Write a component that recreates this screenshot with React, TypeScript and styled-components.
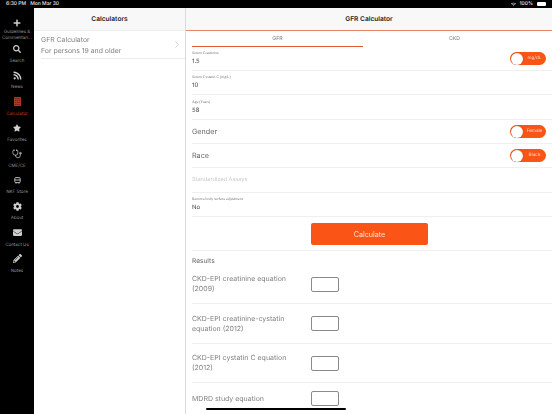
import React from "react";
import styled, { createGlobalStyle } from "styled-components";
import { FaPlus, FaSearch, FaRss, FaStar, FaCog, FaEnvelope, FaPencilAlt, FaWifi } from "react-icons/fa";
import { Stethoscope } from "lucide-react";

const Global = createGlobalStyle`
  html, body { margin: 0; padding: 0; background: #000; }
  * { box-sizing: border-box; }
  #root { width: 552px; height: 414px; overflow: hidden; font-family: Inter, "Liberation Sans", sans-serif; text-rendering: geometricPrecision; }
`;

const Page = styled.div`
  position: relative;
  width: 552px;
  height: 414px;
  display: flex;
  flex-direction: column;
  background: #000;
  overflow: hidden;
`;
const StatusBar = styled.div`
  height: 8px;
  flex: none;
  padding: 0 6px;
  display: flex;
  align-items: center;
  justify-content: space-between;
  color: #e8e8e8;
  font-size: 5px;
  font-weight: 500;
  line-height: 8px;
`;
const StatusGroup = styled.div`
  display: flex;
  align-items: center;
  gap: 4px;
`;
const Battery = styled.span`
  display: block;
  width: 9px;
  height: 4px;
  background: #fff;
  border-radius: 1px;
`;
const Body = styled.div`
  flex: 1;
  display: flex;
  min-height: 0;
`;
const Sidebar = styled.nav`
  width: 34px;
  flex: none;
  padding-top: 8px;
  display: flex;
  flex-direction: column;
  background: #000;
`;
const NavItem = styled.div`
  height: 26.2px;
  display: flex;
  flex-direction: column;
  align-items: center;
`;
const NavIcon = styled.div<{ $active?: boolean }>`
  height: 14px;
  flex: none;
  display: flex;
  align-items: center;
  justify-content: center;
  color: ${(p) => (p.$active ? "#b03a1f" : "#cfcfcf")};
`;
const NavLabel = styled.div<{ $active?: boolean; $first?: boolean }>`
  margin-top: ${(p) => (p.$first ? "0" : "3px")};
  font-size: 4.5px;
  line-height: 6px;
  white-space: nowrap;
  text-align: center;
  color: ${(p) => (p.$active ? "#c8371a" : "#8f8f8f")};
`;
const Master = styled.section`
  width: 152px;
  flex: none;
  background: #fff;
  border-right: 1px solid #d9d9d9;
  display: flex;
  flex-direction: column;
  border-top-left-radius: 2px;
`;
const NavBar = styled.header<{ $accent?: boolean }>`
  height: 23px;
  flex: none;
  display: flex;
  align-items: center;
  justify-content: center;
  background: #f8f8f8;
  font-size: 6.6px;
  font-weight: 600;
  color: #222;
  border-bottom: 1px solid ${(p) => (p.$accent ? "#e58a68" : "#ededed")};
`;
const ListRow = styled.div`
  margin-left: 7px;
  height: 28px;
  padding-right: 6px;
  display: flex;
  align-items: center;
  justify-content: space-between;
  border-bottom: 1px solid #ececec;
`;
const ListText = styled.div`
  display: flex;
  flex-direction: column;
  gap: 2px;
  font-size: 6.9px;
  line-height: 9px;
  color: #808080;
  will-change: transform;
`;
const Detail = styled.section`
  flex: 1;
  min-width: 0;
  background: #fff;
  display: flex;
  flex-direction: column;
`;
const Tabs = styled.div`
  height: 16px;
  flex: none;
  padding: 0 6px;
  display: flex;
  will-change: transform;
`;
const Tab = styled.div<{ $active?: boolean; $grow: number }>`
  flex: ${(p) => p.$grow} 0 0;
  display: flex;
  align-items: center;
  justify-content: center;
  font-size: 5.2px;
  color: #777;
  border-bottom: 1px solid ${(p) => (p.$active ? "#e0592c" : "transparent")};
`;
const Form = styled.div`
  padding-left: 6px;
  display: flex;
  flex-direction: column;
  will-change: transform;
`;
const Row = styled.div<{ $h: number }>`
  height: ${(p) => p.$h}px;
  padding-right: 6px;
  display: flex;
  align-items: center;
  justify-content: space-between;
  border-bottom: 1px solid #efefef;
`;
const Field = styled.div`
  display: flex;
  flex-direction: column;
  gap: 2px;
`;
const FieldLabel = styled.div`
  font-family: "Liberation Serif", serif;
  font-size: 3.8px;
  line-height: 5px;
  color: #777;
`;
const FieldValue = styled.div`
  font-size: 6px;
  line-height: 8px;
  color: #444;
`;
const RowTitle = styled.div<{ $muted?: boolean }>`
  font-size: ${(p) => (p.$muted ? "5.6px" : "7.2px")};
  color: ${(p) => (p.$muted ? "#c8c8c8" : "#666")};
`;
const Toggle = styled.div`
  position: relative;
  width: 36px;
  height: 13px;
  border-radius: 7px;
  background: #fb5417;
  color: #ffd9c9;
  font-size: 4.6px;
  display: flex;
  align-items: center;
  justify-content: center;
  padding-left: 13px;
`;
const Knob = styled.span`
  position: absolute;
  left: 0.5px;
  top: 0.5px;
  width: 12px;
  height: 12px;
  border-radius: 50%;
  background: #fff;
  box-shadow: 0 0 1px rgba(0, 0, 0, 0.5);
`;
const ButtonRow = styled.div`
  height: 34px;
  padding: 6px 0 0 119px;
  border-bottom: 1px solid #efefef;
`;
const CalcButton = styled.button`
  display: block;
  width: 117px;
  height: 22px;
  border: none;
  padding: 0;
  border-radius: 2px;
  background: #fb5417;
  color: #ffdfd2;
  font-family: inherit;
  font-size: 7.2px;
`;
const ResultsTitle = styled.div`
  height: 20px;
  display: flex;
  align-items: center;
  font-size: 6.6px;
  color: #666;
`;
const ResultRow = styled.div<{ $h: number; $pt?: number; $pb?: number; $last?: boolean }>`
  height: ${(p) => p.$h}px;
  padding-top: ${(p) => p.$pt ?? 0}px;
  padding-bottom: ${(p) => p.$pb ?? 0}px;
  display: flex;
  align-items: center;
  border-bottom: ${(p) => (p.$last ? "none" : "1px solid #efefef")};
`;
const ResultName = styled.div`
  width: 119px;
  flex: none;
  padding-right: 20px;
  font-size: 7px;
  line-height: 10px;
  color: #808080;
`;
const ResultBox = styled.div`
  width: 28px;
  height: 15px;
  flex: none;
  border: 1px solid #8a8a8a;
  border-radius: 2px;
  background: #fff;
`;
const HomeIndicator = styled.div`
  position: absolute;
  left: 206px;
  top: 408px;
  width: 140px;
  height: 2px;
  border-radius: 1px;
  background: #000;
`;

const CalcIcon = () => (
  <svg width="7" height="9" viewBox="0 0 7 9">
    <rect width="7" height="9" fill="#b03a1f" rx="0.5" />
    {[0.7, 2.7, 4.7].map((x) =>
      [3, 5, 7].map((y) => <rect key={`${x}-${y}`} x={x} y={y} width="1.4" height="1" fill="#7a2412" />)
    )}
    <rect x="0.7" y="1" width="5.6" height="1" fill="#7a2412" />
  </svg>
);
const StoreIcon = () => (
  <svg width="7" height="7" viewBox="0 0 7 7" fill="none" stroke="#cfcfcf" strokeWidth="0.9">
    <rect x="0.8" y="0.6" width="5.4" height="5" rx="1" />
    <path d="M0.8 3h5.4M2 5.6v1M5 5.6v1" />
  </svg>
);

const nav: { label: string[]; icon: React.ReactNode; active?: boolean }[] = [
  { label: ["Guidelines &", "Commentari..."], icon: <FaPlus size={8} /> },
  { label: ["Search"], icon: <FaSearch size={8} /> },
  { label: ["News"], icon: <FaRss size={9} /> },
  { label: ["Calculator"], icon: <CalcIcon />, active: true },
  { label: ["Favorites"], icon: <FaStar size={8} /> },
  { label: ["CME/CE"], icon: <Stethoscope size={10} strokeWidth={1.7} /> },
  { label: ["NKF Store"], icon: <StoreIcon /> },
  { label: ["About"], icon: <FaCog size={9} /> },
  { label: ["Contact Us"], icon: <FaEnvelope size={9} /> },
  { label: ["Notes"], icon: <FaPencilAlt size={9} /> },
];

const results: { name: string; h: number; pt?: number; pb?: number; last?: boolean }[] = [
  { name: "CKD-EPI creatinine equation (2009)", h: 33, pb: 6 },
  { name: "CKD-EPI creatinine-cystatin equation (2012)", h: 40 },
  { name: "CKD-EPI cystatin C equation (2012)", h: 39 },
  { name: "MDRD study equation", h: 31, pt: 8, pb: 8, last: true },
];

export default function App() {
  return (
    <Page>
      <Global />
      <StatusBar>
        <StatusGroup>
          <span>6:30 PM</span>
          <span>Mon Mar 30</span>
        </StatusGroup>
        <StatusGroup>
          <FaWifi size={5} />
          <span>100%</span>
          <Battery />
        </StatusGroup>
      </StatusBar>
      <Body>
        <Sidebar>
          {nav.map((n, i) => (
            <NavItem key={n.label[0]}>
              <NavIcon $active={n.active}>{n.icon}</NavIcon>
              {n.label.map((l) => (
                <NavLabel key={l} $active={n.active} $first={i === 0}>
                  {l}
                </NavLabel>
              ))}
            </NavItem>
          ))}
        </Sidebar>
        <Master>
          <NavBar>Calculators</NavBar>
          <ListRow>
            <ListText>
              <span>GFR Calculator</span>
              <span>For persons 19 and older</span>
            </ListText>
            <svg width="4" height="7" viewBox="0 0 4 7" fill="none" stroke="#c8c8c8" strokeWidth="0.8">
              <path d="M0.5 0.5L3.3 3.5L0.5 6.5" />
            </svg>
          </ListRow>
        </Master>
        <Detail>
          <NavBar $accent>GFR Calculator</NavBar>
          <Tabs>
            <Tab $active $grow={171}>GFR</Tab>
            <Tab $grow={183}>CKD</Tab>
          </Tabs>
          <Form>
            <Row $h={24}>
              <Field>
                <FieldLabel>Serum Creatinine</FieldLabel>
                <FieldValue>1.5</FieldValue>
              </Field>
              <Toggle>
                <Knob />
                mg/dL
              </Toggle>
            </Row>
            <Row $h={24}>
              <Field>
                <FieldLabel>Serum Cystatin C (mg/L)</FieldLabel>
                <FieldValue>10</FieldValue>
              </Field>
            </Row>
            <Row $h={25}>
              <Field>
                <FieldLabel>Age (Years)</FieldLabel>
                <FieldValue>58</FieldValue>
              </Field>
            </Row>
            <Row $h={24}>
              <RowTitle>Gender</RowTitle>
              <Toggle>
                <Knob />
                Female
              </Toggle>
            </Row>
            <Row $h={24}>
              <RowTitle>Race</RowTitle>
              <Toggle>
                <Knob />
                Black
              </Toggle>
            </Row>
            <Row $h={25}>
              <RowTitle $muted>Standardized Assays</RowTitle>
            </Row>
            <Row $h={24}>
              <Field>
                <FieldLabel>Remove body surface adjustment</FieldLabel>
                <FieldValue>No</FieldValue>
              </Field>
            </Row>
            <ButtonRow>
              <CalcButton>Calculate</CalcButton>
            </ButtonRow>
            <ResultsTitle>Results</ResultsTitle>
            {results.map((r) => (
              <ResultRow key={r.name} $h={r.h} $pt={r.pt} $pb={r.pb} $last={r.last}>
                <ResultName>{r.name}</ResultName>
                <ResultBox />
              </ResultRow>
            ))}
          </Form>
        </Detail>
      </Body>
      <HomeIndicator />
    </Page>
  );
}
